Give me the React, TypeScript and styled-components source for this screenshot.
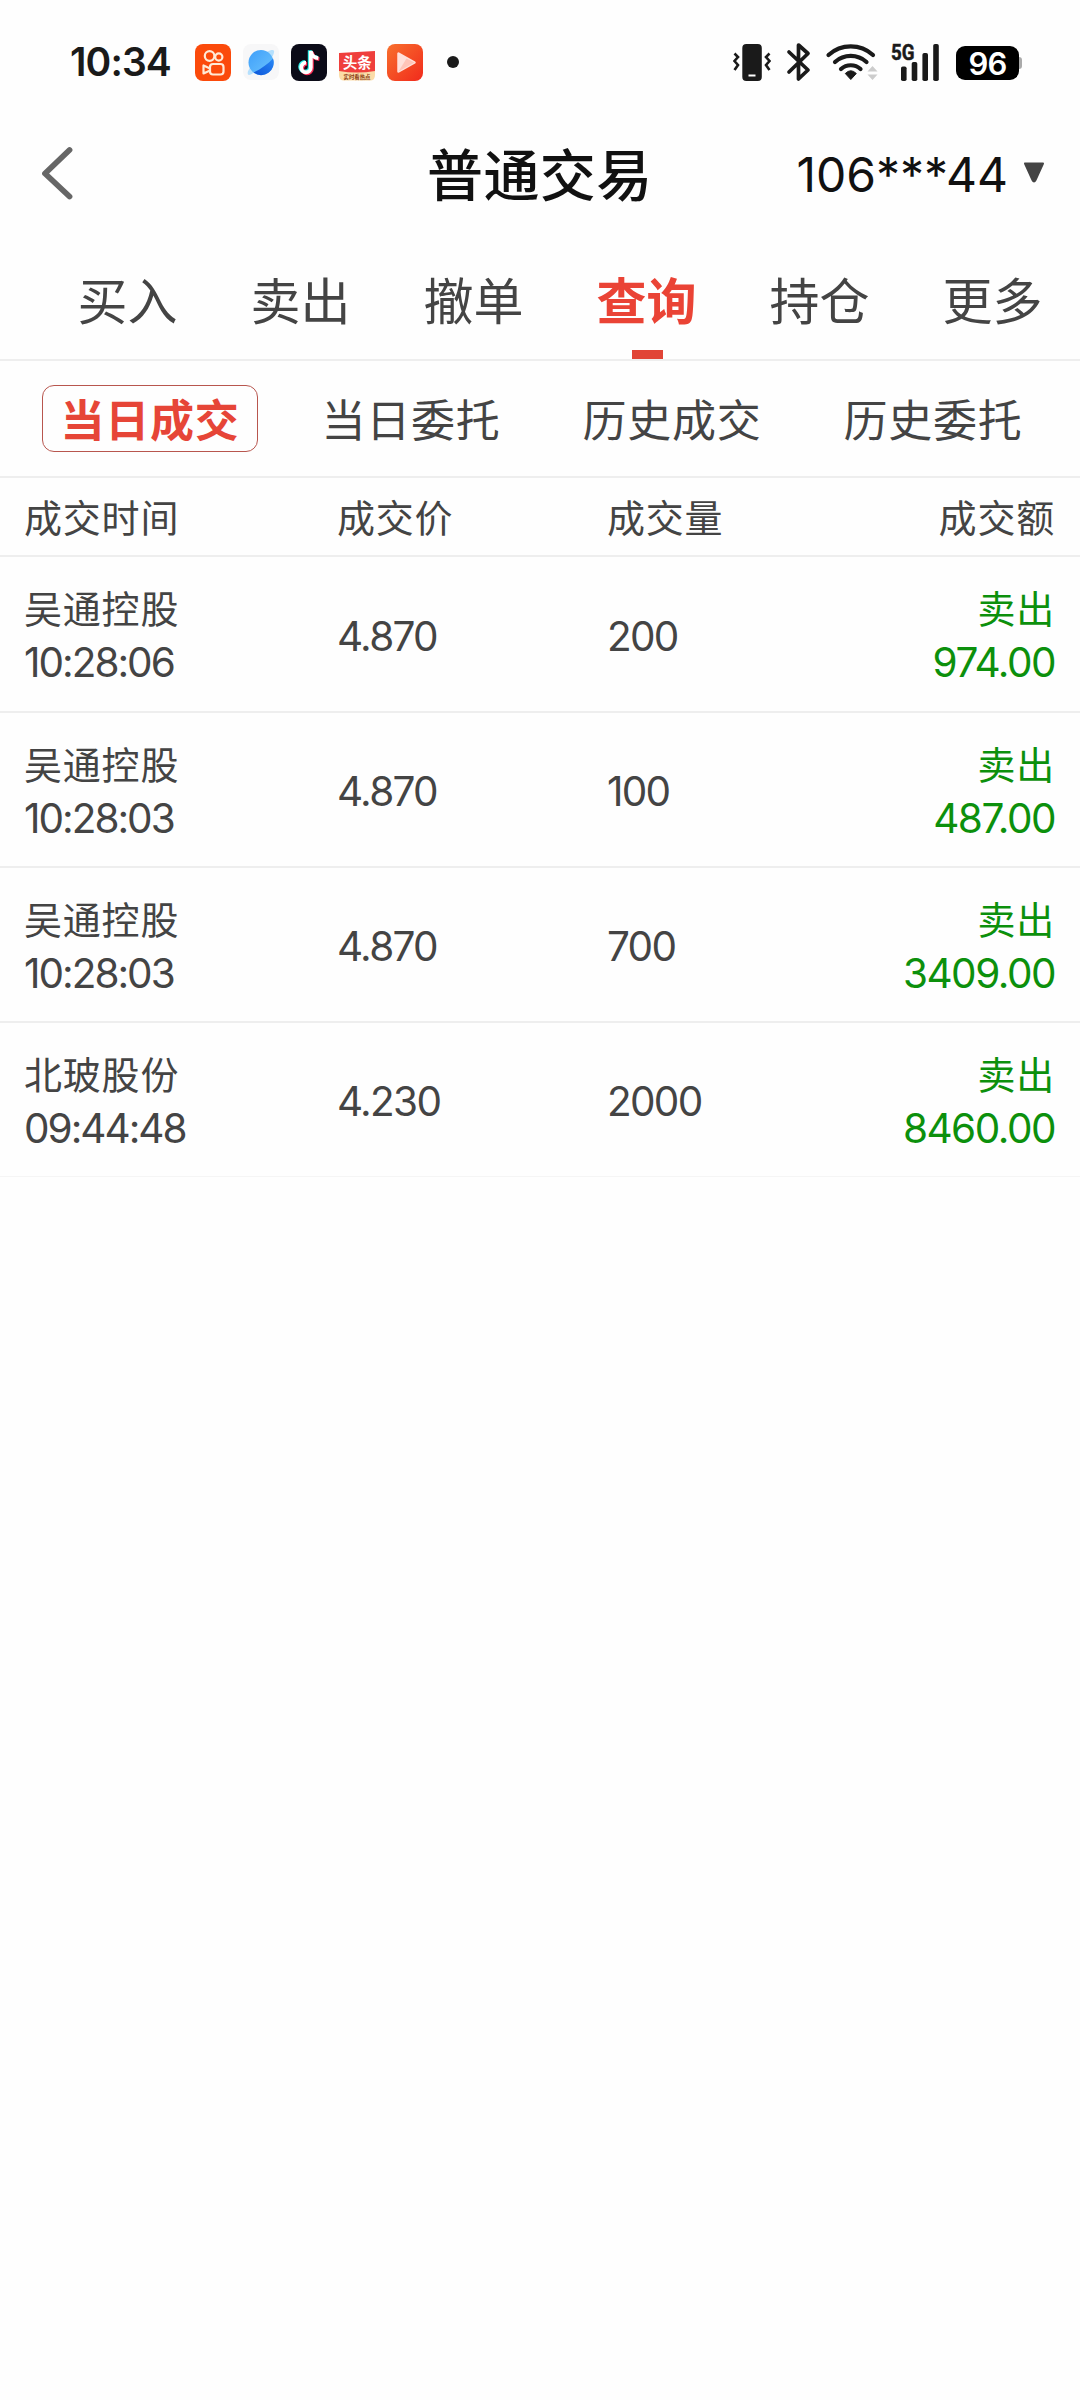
import React from 'react';
import styled, { createGlobalStyle } from 'styled-components';

const GlobalStyle = createGlobalStyle`
  * { box-sizing: border-box; }
  body {
    margin: 0;
    background: #fefefe;
    color: #444;
    font-family: Inter, "Noto Sans CJK SC", sans-serif;
  }
`;

const Screen = styled.main`
  width: 1080px;
  min-height: 2400px;
  background: #fefefe;
`;

const StatusBar = styled.div`
  display: flex;
  align-items: center;
  justify-content: space-between;
  height: 124px;
  padding: 0 58px 0 70px;
`;

const StatusGroup = styled.div`
  display: flex;
  align-items: center;
`;

const Clock = styled.span`
  width: 125px;
  font-size: 39px;
  font-weight: 600;
  line-height: 44px;
  letter-spacing: -0.9px;
  color: #1a1a1a;
`;

const AppIcons = styled.div`
  display: flex;
  align-items: center;
  gap: 12px;
`;

const Dot = styled.span`
  width: 12px;
  height: 12px;
  margin-left: 12px;
  border-radius: 50%;
  background: #1a1a1a;
`;

const Glyph = styled.svg<{ $gap?: number }>`
  display: block;
  flex: none;
  overflow: visible;
  margin-left: ${(p) => p.$gap ?? 0}px;
`;

const Battery = styled.div`
  display: flex;
  align-items: center;
  margin-left: 17px;
  padding-top: 2px;
`;

const BatteryBody = styled.span`
  width: 63px;
  height: 34px;
  border-radius: 9px;
  background: #000;
  color: #fff;
  font-size: 31px;
  font-weight: 600;
  line-height: 35px;
  text-align: center;
  letter-spacing: -0.8px;
`;

const BatteryTip = styled.span`
  width: 3px;
  height: 12px;
  border-radius: 0 3px 3px 0;
  background: #aaa;
`;

const Header = styled.header`
  display: grid;
  grid-template-columns: 387px auto 1fr;
  align-items: center;
  height: 100px;
  padding: 0 35px 0 40px;
`;

const Title = styled.h1`
  margin: 0;
  padding-top: 3px;
  font-size: 56px;
  font-weight: 500;
  line-height: 80px;
  letter-spacing: 0.4px;
  color: #111;
`;

const Account = styled.div`
  display: flex;
  align-items: center;
  justify-content: flex-end;
  gap: 15px;
  font-size: 48px;
  line-height: 60px;
  color: #111;
`;

const AccountNumber = styled.span`
  padding-top: 2px;
`;

const Tabs = styled.nav`
  display: flex;
  height: 137px;
  padding-left: 41px;
  border-bottom: 2px solid #eee;
`;

const Tab = styled.div<{ $active?: boolean }>`
  display: flex;
  flex-direction: column;
  align-items: center;
  justify-content: flex-end;
  flex: none;
  width: 173px;
  font-size: 50px;
  line-height: 60px;
  font-weight: ${(p) => (p.$active ? 700 : 400)};
  color: ${(p) => (p.$active ? '#ea4335' : '#444')};
  &::after {
    content: '';
    width: 31px;
    height: 9px;
    margin: 18px 0 0 1px;
    background: ${(p) => (p.$active ? '#e14436' : 'transparent')};
  }
`;

const SubTabs = styled.nav`
  display: flex;
  align-items: center;
  gap: 45px;
  height: 117px;
  padding: 0 0 1px 42px;
  border-bottom: 2px solid #eee;
`;

const SubTab = styled.div<{ $active?: boolean }>`
  display: flex;
  align-items: center;
  justify-content: center;
  width: 216px;
  height: 67px;
  border: 1px solid ${(p) => (p.$active ? '#b8564e' : 'transparent')};
  border-radius: 12px;
  font-size: 44px;
  letter-spacing: 0.8px;
  font-weight: ${(p) => (p.$active ? 700 : 400)};
  color: ${(p) => (p.$active ? '#e64537' : '#444')};
`;

const Row = styled.div<{ $height: number; $line: string }>`
  display: grid;
  grid-template-columns: 313px 270px 1fr auto;
  align-items: center;
  height: ${(p) => p.$height}px;
  padding: 4px 25px 0 24px;
  border-bottom: ${(p) => p.$line};
  font-size: 38px;
  line-height: 53px;
  letter-spacing: 0.8px;
`;

const Stack = styled.div<{ $side?: 'right' }>`
  display: flex;
  flex-direction: column;
  align-items: ${(p) => (p.$side ? 'flex-end' : 'flex-start')};
  color: ${(p) => (p.$side ? '#0c900c' : 'inherit')};
`;

const Numeric = styled.span<{ $tracking?: number }>`
  font-size: 40.5px;
  letter-spacing: ${(p) => p.$tracking ?? -1.7}px;
`;

const tabs = ['买入', '卖出', '撤单', '查询', '持仓', '更多'];
const subTabs = ['当日成交', '当日委托', '历史成交', '历史委托'];
const deals = [
  { name: '吴通控股', time: '10:28:06', price: '4.870', qty: '200', amount: '974.00' },
  { name: '吴通控股', time: '10:28:03', price: '4.870', qty: '100', amount: '487.00' },
  { name: '吴通控股', time: '10:28:03', price: '4.870', qty: '700', amount: '3409.00' },
  { name: '北玻股份', time: '09:44:48', price: '4.230', qty: '2000', amount: '8460.00' },
];
const rowHeights = [156, 155, 155, 154];

const KuaishouIcon = () => (
  <Glyph width="36" height="37" viewBox="0 0 36 37">
    <rect width="36" height="37" rx="8" fill="#fb4a0b" />
    <g fill="none" stroke="#ffe9d6" strokeWidth="2.2" strokeLinejoin="round">
      <circle cx="14.6" cy="12" r="4.8" />
      <circle cx="23.8" cy="13" r="3.6" />
      <rect x="15" y="20" width="13.5" height="10.5" rx="3" />
      <path d="M15 24.5 8.5 21.500v8L15 26.500" />
    </g>
  </Glyph>
);

const PlanetIcon = () => (
  <Glyph width="36" height="36" viewBox="0 0 36 36">
    <defs>
      <linearGradient id="planet" x1="0" y1="0" x2="1" y2="1">
        <stop offset="0" stopColor="#3f9ffa" />
        <stop offset="1" stopColor="#6cc4fd" />
      </linearGradient>
      <linearGradient id="shade" x1="1" y1="0" x2="0" y2="1">
        <stop offset="0" stopColor="#2a88f5" />
        <stop offset="1" stopColor="#0c55d8" />
      </linearGradient>
    </defs>
    <rect width="36" height="36" rx="8" fill="#f7f7f8" />
    <path d="M5 30.500c-1-2 .500-5 3-8L24 8c4-2.500 6.500-2.500 7-1s-1 5-3.500 8.500L12 28c-4 2.500-6 3.500-7 2.500Z" fill="#b5e0fd" />
    <circle cx="18" cy="18.500" r="12.500" fill="url(#planet)" />
    <path d="M30 14.500A12.500 12.500 0 0 1 10.500 28.500C18 25 25 20 30 14.500Z" fill="url(#shade)" />
  </Glyph>
);

const NOTE = 'M18.5 7v16.5a4.8 4.8 0 1 1-4.8-4.8M18.5 7c.6 4.2 3.4 6.8 7.5 7.2';

const DouyinIcon = () => (
  <Glyph width="36" height="37" viewBox="0 0 36 37">
    <rect width="36" height="37" rx="8" fill="#0b0b18" />
    <g fill="none" strokeWidth="3.8">
      <path d={NOTE} stroke="#2af0ea" transform="translate(.2 -.8)" />
      <path d={NOTE} stroke="#fb2c55" transform="translate(2.4 1)" />
      <path d={NOTE} stroke="#fff" transform="translate(1.3 0)" />
    </g>
  </Glyph>
);

const ToutiaoIcon = () => (
  <Glyph width="36" height="37" viewBox="0 0 36 37">
    <path d="M0 26h36v5q0 5.500-5 5.500H5q-5 0-5-5.500Z" fill="#fbdca8" />
    <path d="M0 9 36 7v20q-18 3-36 0Z" fill="#ef3f3c" />
    <text x="18.3" y="24" textAnchor="middle" fontSize="14.5" fontWeight="700" fill="#fff" fontFamily="'Noto Sans CJK SC', sans-serif">头条</text>
    <text x="18" y="34.8" textAnchor="middle" fontSize="5.4" fontWeight="700" fill="#8a3a10" fontFamily="'Noto Sans CJK SC', sans-serif">实时看热点</text>
  </Glyph>
);

const PlayIcon = () => (
  <Glyph width="36" height="37" viewBox="0 0 36 37">
    <defs>
      <linearGradient id="play" x1="0" y1="0" x2="1" y2="1">
        <stop offset="0" stopColor="#f8702d" />
        <stop offset="1" stopColor="#f12a1c" />
      </linearGradient>
    </defs>
    <rect width="36" height="37" rx="8" fill="url(#play)" />
    <path d="M11.500 9.500v18l16-9Z" fill="#ffe0da" stroke="#ffe0da" strokeWidth="2.5" strokeLinejoin="round" />
    <path d="M11.500 27.500 19.500 14.500l8 4Z" fill="#ffc4b8" />
  </Glyph>
);

const VibrateIcon = () => (
  <Glyph width="38" height="37" viewBox="0 0 38 37">
    <rect x="9.3" y="0" width="19.5" height="37" rx="4" fill="#1a1a1a" />
    <rect x="15.5" y="30.5" width="7" height="2" fill="#fff" />
    <path d="M1.500 9.500 5 13l-3.500 4L5 21l-3.500 5M36.500 9.500 33 13l3.500 4-3.500 4 3.500 5" fill="none" stroke="#1a1a1a" strokeWidth="2.6" />
  </Glyph>
);

const BluetoothIcon = () => (
  <Glyph $gap={16} width="24" height="38" viewBox="0 0 24 38">
    <path d="m2 9 19 18-9.500 9V2L21 10.500 2 29" fill="none" stroke="#1a1a1a" strokeWidth="3.7" strokeLinejoin="round" strokeLinecap="round" />
  </Glyph>
);

const WifiIcon = () => (
  <Glyph $gap={15} width="52" height="37" viewBox="0 0 52 37">
    <g fill="none" stroke="#1a1a1a" strokeWidth="4.2" strokeLinecap="round">
      <path d="M2.500 11a33 33 0 0 1 44.500 0" />
      <path d="M9 18a23.500 23.500 0 0 1 31.500 0" />
      <path d="M15 25a14.500 14.500 0 0 1 19.500 0" />
    </g>
    <path d="M19.300 29.500q5.500-5.500 11 0L24.800 35.500Z" fill="#1a1a1a" stroke="#1a1a1a" strokeLinejoin="round" />
    <path d="m41.500 27.500 5-5.500 5 5.500ZM41.500 30.500h10l-5 5.500Z" fill="#ccc" />
  </Glyph>
);

const SignalIcon = () => (
  <Glyph $gap={13} width="48" height="38" viewBox="0 0 48 38">
    <text x="0" y="16.5" fontSize="22.5" fontWeight="700" fill="#1a1a1a" stroke="#1a1a1a" strokeWidth=".5" fontFamily="Roboto, sans-serif" textLength="23.5" lengthAdjust="spacingAndGlyphs">5G</text>
    <g fill="#1a1a1a">
      <rect x="10" y="23.5" width="5.6" height="14.5" rx="1.8" />
      <rect x="20.7" y="19" width="5.6" height="19" rx="1.8" />
      <rect x="31.4" y="10" width="5.6" height="28" rx="1.8" />
      <rect x="42.2" y="1" width="5.6" height="37" rx="1.8" />
    </g>
  </Glyph>
);

export default function App() {
  return (
    <>
      <GlobalStyle />
      <Screen>
        <StatusBar>
          <StatusGroup>
            <Clock>10:34</Clock>
            <AppIcons>
              <KuaishouIcon />
              <PlanetIcon />
              <DouyinIcon />
              <ToutiaoIcon />
              <PlayIcon />
              <Dot />
            </AppIcons>
          </StatusGroup>
          <StatusGroup>
            <VibrateIcon />
            <BluetoothIcon />
            <WifiIcon />
            <SignalIcon />
            <Battery>
              <BatteryBody>96</BatteryBody>
              <BatteryTip />
            </Battery>
          </StatusGroup>
        </StatusBar>
        <Header>
          <Glyph width="34" height="54" viewBox="0 0 34 54">
            <path d="M29.500 3 5 26.500l24.500 23" fill="none" stroke="#666" strokeWidth="5.8" strokeLinecap="round" strokeLinejoin="round" />
          </Glyph>
          <Title>普通交易</Title>
          <Account>
            <AccountNumber>106***44</AccountNumber>
            <Glyph width="22" height="24" viewBox="0 0 22 24">
              <path d="M2 1.500h18L12.500 18q-1.500 3-3 0Z" fill="#444" stroke="#444" strokeWidth="2" strokeLinejoin="round" />
            </Glyph>
          </Account>
        </Header>
        <Tabs>
          {tabs.map((t) => (
            <Tab key={t} $active={t === '查询'}>{t}</Tab>
          ))}
        </Tabs>
        <SubTabs>
          {subTabs.map((t, i) => (
            <SubTab key={t} $active={i === 0}>{t}</SubTab>
          ))}
        </SubTabs>
        <Row $height={79} $line="2px solid #eee">
          <span>成交时间</span>
          <span>成交价</span>
          <span>成交量</span>
          <span>成交额</span>
        </Row>
        {deals.map((d, i) => (
          <Row key={i} $height={rowHeights[i]} $line={i === deals.length - 1 ? '1px solid #f5f5f5' : '2px solid #eee'}>
            <Stack>
              <span>{d.name}</span>
              <Numeric $tracking={-2}>{d.time}</Numeric>
            </Stack>
            <Numeric>{d.price}</Numeric>
            <Numeric>{d.qty}</Numeric>
            <Stack $side="right">
              <span>卖出</span>
              <Numeric $tracking={-1.5}>{d.amount}</Numeric>
            </Stack>
          </Row>
        ))}
      </Screen>
    </>
  );
}
